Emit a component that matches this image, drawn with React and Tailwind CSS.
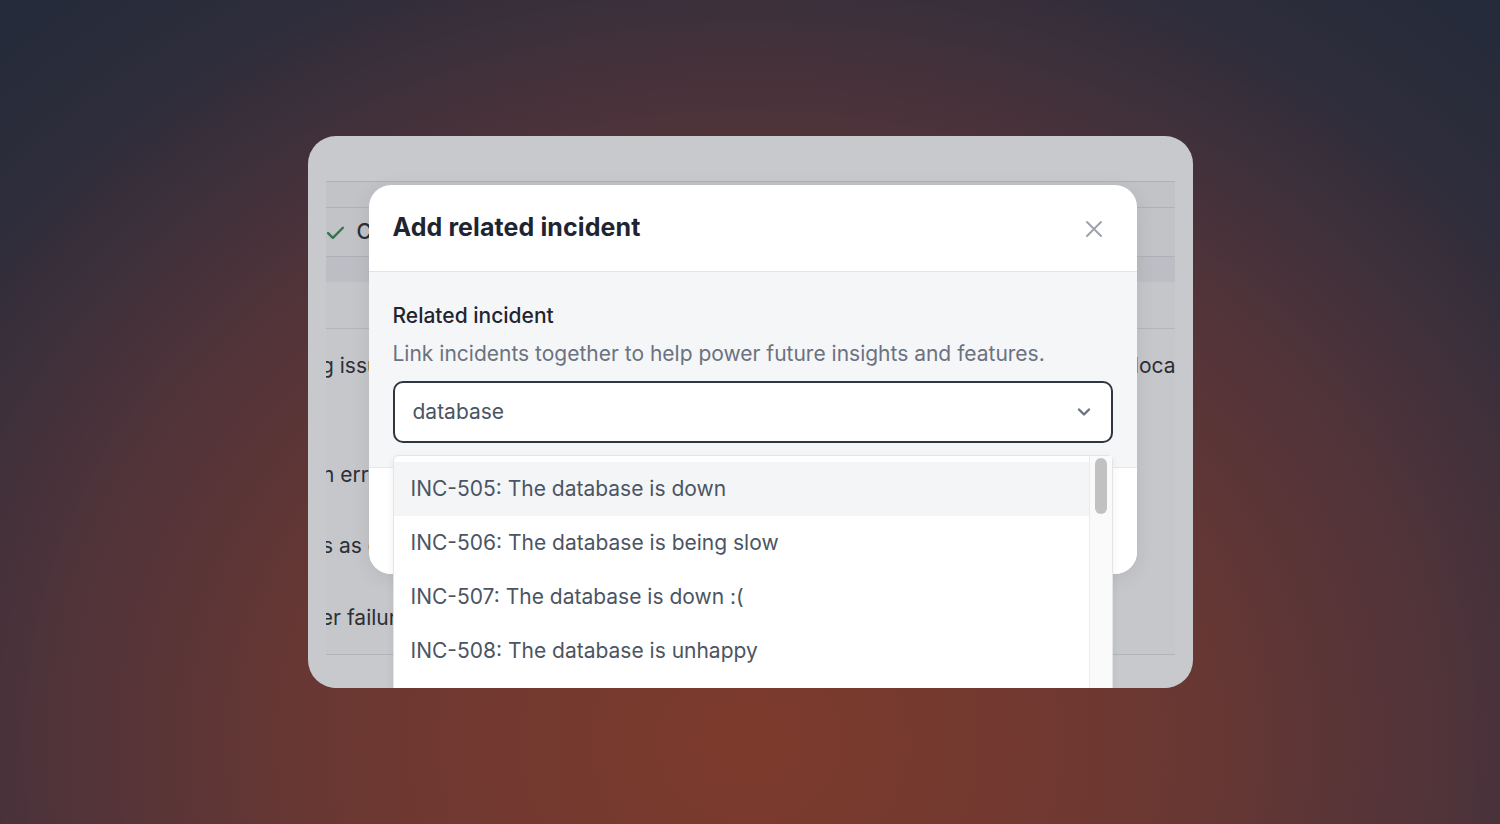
import React from "react";

function Check() {
  return (
    <svg width="19" height="19" viewBox="0 0 18 18" fill="none">
      <path d="M2 9.5l4.5 4.5L16 4.5" stroke="#37744a" strokeWidth="2.3" strokeLinecap="round" strokeLinejoin="round" />
    </svg>
  );
}

function CloseIcon() {
  return (
    <svg width="18" height="18" viewBox="0 0 18 18" fill="none">
      <path d="M2 2l14 14M16 2L2 16" stroke="#9ca3af" strokeWidth="2" strokeLinecap="round" />
    </svg>
  );
}

function Chevron() {
  return (
    <svg width="16" height="16" viewBox="0 0 16 16" fill="none">
      <path d="M3 5.5l5 5 5-5" stroke="#6b7280" strokeWidth="2.4" strokeLinecap="round" strokeLinejoin="round" />
    </svg>
  );
}

const options = [
  "INC-505: The database is down",
  "INC-506: The database is being slow",
  "INC-507: The database is down :(",
  "INC-508: The database is unhappy",
  "INC-509: The database is on fire",
];

export default function App() {
  return (
    <div className="w-[1500px] h-[824px] flex items-start justify-center pt-[136px] bg-[radial-gradient(ellipse_1150px_1000px_at_50%_90%,#7d3a2c_0%,#6c3832_35%,#4e333a_62%,#2f2d3b_82%,#252b3a_96%)] font-['Inter','Noto_Sans',sans-serif]">
      <div className="relative w-[885px] h-[552px] rounded-[28px] overflow-hidden bg-[#c8c9cc] px-[18px] pt-[45px]">
        {/* dimmed page behind */}
        <div className="h-full overflow-hidden text-[21px] text-[#2c2f36]">
          <div className="border-t border-[#aeb1b7] bg-[#c1c3c7]">
            <div className="h-[26px] border-b border-[#aeb1b7]" />
            <div className="h-[49px] flex items-center gap-[12px] border-b border-[#aeb1b7]">
              <Check />
              <span className="font-medium">Closed</span>
            </div>
            <div className="h-[25px] bg-[#bcbec3]" />
          </div>
          <div className="h-[47px] border-b border-[#b3b6bb] bg-[#c5c6ca]" />
          <div className="bg-[#c6c7cb] h-[325px] flex flex-col">
            <div className="h-[74px] shrink-0 flex items-center">
              <span className="ml-[-76px] whitespace-nowrap">Ongoing issues</span>
              <span className="ml-auto mr-[-38px] whitespace-nowrap">location</span>
            </div>
            <div className="h-[37px] shrink-0" />
            <div className="h-[70px] shrink-0 flex items-center">
              <span className="ml-[-105px] whitespace-nowrap">Connection errors</span>
            </div>
            <div className="h-[72px] shrink-0 flex items-center">
              <span className="ml-[-54px] whitespace-nowrap">Marks as  good</span>
            </div>
            <div className="h-[72px] shrink-0 flex items-center">
              <span className="ml-[-50px] whitespace-nowrap">Server failures</span>
            </div>
          </div>
          <div className="border-t border-[#b0b3b8] h-[40px] bg-[#c8c9cc]" />
        </div>

        {/* modal */}
        <div className="absolute left-[61px] top-[49px] w-[768px] h-[389px] rounded-[22px] bg-white overflow-hidden flex flex-col shadow-[0_4px_20px_rgba(0,0,0,0.08)]">
          <div className="h-[87px] shrink-0 flex items-center justify-between px-[24px] border-b border-[#e2e4e8]">
            <h2 className="text-[25px] font-bold text-[#1f2530] tracking-[0.1px]">Add related incident</h2>
            <button className="mr-[10px] mt-[1px]"><CloseIcon /></button>
          </div>
          <div className="bg-[#f5f6f8] px-[24px] pt-[30px] pb-[24px] border-b border-[#e5e7eb]">
            <div className="text-[21px] leading-[28px] font-medium text-[#1f2530]">Related incident</div>
            <div className="mt-[10px] text-[21px] leading-[28px] text-[#6b7280]">Link incidents together to help power future insights and features.</div>
            <div className="mt-[13px] h-[62px] rounded-[10px] border-2 border-[#30363f] bg-white flex items-center justify-between pl-[18px] pr-[19px]">
              <span className="text-[21px] text-[#4b5563]">database</span>
              <Chevron />
            </div>
          </div>
          <div className="flex-1 bg-white" />
        </div>

        {/* dropdown menu */}
        <div className="absolute left-[85px] top-[319px] w-[720px] h-[280px] bg-white border border-[#e2e4e8] rounded-t-[6px] shadow-[0_2px_8px_rgba(0,0,0,0.06)] flex">
          <div className="flex-1 pt-[6px]">
            {options.map((o, i) => (
              <div
                key={o}
                className={
                  i === 0
                    ? "h-[54px] flex items-center pl-[17px] text-[21px] text-[#4b5563] bg-[#f4f5f7]"
                    : "h-[54px] flex items-center pl-[17px] text-[21px] text-[#4b5563]"
                }
              >
                {o}
              </div>
            ))}
          </div>
          <div className="w-[23px] border-l border-[#ebebeb] bg-[#fafafa] flex justify-center pt-[2px]">
            <div className="w-[12px] h-[56px] rounded-full bg-[#c1c1c1]" />
          </div>
        </div>
      </div>
    </div>
  );
}
